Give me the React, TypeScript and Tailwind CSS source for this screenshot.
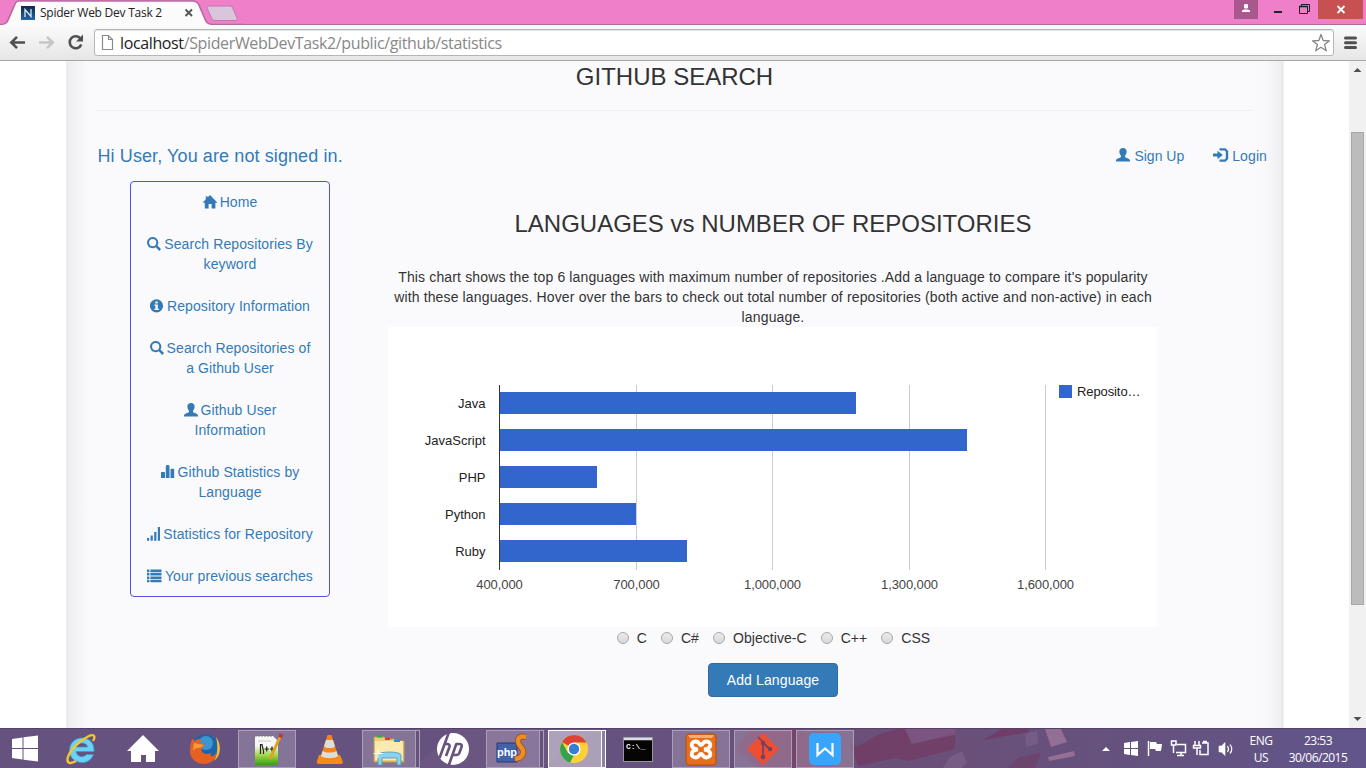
import React from "react";

const G = ({ d, w = 14, className = "" }: { d: string; w?: number; className?: string }) => (
  <svg className={"inline-block shrink-0 fill-current align-[-1.5px] " + className} width={w} height="14" viewBox={`0 0 ${w} 14`}>
    <path fillRule="evenodd" d={d} />
  </svg>
);

const HOME = "M7 0L14 7.300V7.800H12.400V13.500H8.600V9H5.600V13.500H1.800V7.800H0V7.300L2.800 4.300V1.200H4.500V2.500z";
const SEARCH = "M5.7 0a5.6 5.6 0 0 1 4.700 8.600l3.600 3.500-1.700 1.800-3.600-3.600A5.600 5.600 0 1 1 5.700 0zm0 2a3.600 3.600 0 1 0 0 7.200a3.600 3.600 0 1 0 0-7.200z";
const INFO = "M6.500 .2a6.600 6.600 0 1 1 0 13.200a6.600 6.600 0 1 1 0-13.200zM5.300 2.500V4.500H7.700V2.500zM4.400 5.600V6.700H5.400V9.800H4.400V11H8.900V9.800H7.800V5.600z";
const USER = "M7 0C9.300 0 10.600 1.500 10.600 3.400C10.600 5.200 10 6.600 9.100 7.600V9C9.400 10 14 10.400 14 12.400V13.500H0V12.400C0 10.400 4.600 10 4.900 9V7.600C4 6.600 3.400 5.200 3.400 3.400C3.400 1.500 4.700 0 7 0z";
const STATS = "M0 7.600a.6.6 0 0 1 .6-.6H3.400a.6.6 0 0 1 .6.6V13H0zM4.800 1.300L5.500 0H7.700L8.500 1.300V13H4.800zM9.500 4.300a.6.6 0 0 1 .6-.6h2.500a.6.6 0 0 1 .6.6V13H9.500z";
const SIGNAL = "M0 11h2.200v2.800H0zM3.600 8.600h2.200v5.200h-2.200zM7.200 5h2.200v8.800h-2.200zM10.800 0h2.200v13.800h-2.200z";
const LIST = "M0 .6H2.400V3.200H0zM3.400 .6H14.500V3.200H3.400zM0 4H2.400V6.500H0zM3.400 4H14.500V6.500H3.400zM0 7.400H2.400V9.900H0zM3.400 7.400H14.500V9.900H3.400zM0 10.800H2.400V13.300H0zM3.400 10.800H14.500V13.300H3.400z";
const LOGIN = "M4.500 2.800L9.800 7L4.500 11.200V8.600H0V5.400H4.500zM6.500 .3H12.500L15.200 3V11L12.500 13.700H6.500V11.400H11.600L12.800 10.200V3.800L11.600 2.600H6.500z";

const nav: { d: string; w?: number; lines: string[] }[] = [
  { d: HOME, lines: ["Home"] },
  { d: SEARCH, lines: ["Search Repositories By", "keyword"] },
  { d: INFO, lines: ["Repository Information"] },
  { d: SEARCH, lines: ["Search Repositories of", "a Github User"] },
  { d: USER, lines: ["Github User", "Information"] },
  { d: STATS, lines: ["Github Statistics by", "Language"] },
  { d: SIGNAL, w: 13, lines: ["Statistics for Repository"] },
  { d: LIST, w: 15, lines: ["Your previous searches"] },
];

const bars: [string, number][] = [
  ["Java", 357],
  ["JavaScript", 468],
  ["PHP", 98],
  ["Python", 137],
  ["Ruby", 188],
];
const ticks: [string, number][] = [
  ["400,000", 111.5],
  ["700,000", 248.5],
  ["1,000,000", 384.5],
  ["1,300,000", 521.5],
  ["1,600,000", 657.5],
];

function Chart() {
  return (
    <svg width="769" height="300" viewBox="0 0 769 300" className="block bg-white" fontFamily="Liberation Sans, Arial, sans-serif" fontSize="13">
      {ticks.map(([t, x], i) => (
        <g key={t}>
          {i > 0 && <path d={`M${x} 58V243`} stroke="#ccc" />}
          <text x={x} y="262" textAnchor="middle" fill="#444" letterSpacing="-0.1">{t}</text>
        </g>
      ))}
      {bars.map(([t, w], i) => (
        <g key={t}>
          <rect x="111" y={65 + i * 37} width={w} height="22" fill="#3366cc" />
          <text x="97.500" y={81 + i * 37} textAnchor="end" fill="#222">{t}</text>
        </g>
      ))}
      <path d="M111.500 58V243" stroke="#333" />
      <rect x="671" y="58" width="13" height="13" fill="#3366cc" />
      <text x="689" y="69" fill="#222" letterSpacing="-0.1">Reposito…</text>
    </svg>
  );
}

function TabStrip() {
  return (
    <div className="relative flex h-[25px] border-b border-[#b06a9b] bg-[#f07fca]">
      <svg className="absolute left-0 top-0" width="245" height="25" viewBox="0 0 245 25">
        <path d="M0 24.500C5 24.500 6.500 23.500 8 20L14.500 5C15.800 1.800 17 1 20 1H192C196 1 197.500 2 199 5L205.500 20C207 23.500 208.500 24.500 213 24.500H245" fill="none" stroke="#b06a9b" strokeWidth="1.500" />
        <path d="M0 25C6 25 7.500 23.500 9 20L15.500 5C16.500 2.300 17.500 1.800 20 1.800H192C195.500 1.800 196.800 2.600 198 5L204.500 20C206 23.500 208 25 213 25z" fill="#fbfbfb" />
        <path d="M209.500 6H229C231 6 232 6.500 232.700 8L237 18C237.800 19.800 237 20.500 235 20.500H216C213.500 20.500 212.300 20 211.500 18L207.300 8.500C206.700 7 207.500 6 209.500 6z" fill="#d9c5dc" stroke="#c077ad" />
        <defs>
          <linearGradient id="fav" x1="0" y1="0" x2="0" y2="1"><stop stopColor="#10294c" /><stop offset="1" stopColor="#2666a8" /></linearGradient>
        </defs>
        <rect x="21" y="6" width="14" height="14" fill="url(#fav)" />
        <path d="M25 17V9.500L31 16.500V9" fill="none" stroke="#dceaf5" strokeWidth="1.300" />
        <path d="M185.500 9.500L192 16M192 9.500L185.500 16" stroke="#555" strokeWidth="1.900" />
      </svg>
      <span className="relative ml-[40px] mt-[5px] font-['Open_Sans','Noto_Sans',sans-serif] text-[12px] leading-[16px] tracking-[-0.25px] whitespace-nowrap text-[#222]">Spider Web Dev Task 2</span>
      <div className="ml-auto flex h-[19px]">
        <svg width="132" height="19" viewBox="0 0 132 19">
          <rect width="24" height="19" fill="#a9588e" />
          <path d="M10 5L10.700 4H13.300L14 5V7.500L13.300 8.500H10.700L10 7.500zM8 12V10.500L10 9.500H14L16 10.500V12z" fill="#fff" />
          <path d="M40 12H48" stroke="#222" strokeWidth="2" />
          <path d="M65.500 6.500H73.500V13.500H65.500zM67.500 6V4.500H75.500V11.500H74" fill="none" stroke="#222" />
          <path d="M65 6.500H74" stroke="#222" strokeWidth="1.600" />
          <rect x="84" width="45" height="19" fill="#c75050" />
          <path d="M103.500 6L110.500 13M110.500 6L103.500 13" stroke="#fff" strokeWidth="1.800" />
        </svg>
      </div>
    </div>
  );
}

function Toolbar() {
  return (
    <div className="flex h-[36px] items-center border-b border-[#a6a6a6] bg-gradient-to-b from-[#fbfbfb] to-[#e6e6e6]">
      <svg width="94" height="35" viewBox="0 0 94 35" fill="none">
        <path d="M11.500 17.500H25M17 11.800L11.300 17.500L17 23.200" stroke="#505050" strokeWidth="2.600" />
        <path d="M39 17.500H52.500M47 11.800L52.700 17.500L47 23.200" stroke="#c6c6c6" strokeWidth="2.600" />
        <path d="M80.800 14A6 6 0 1 0 81.300 19.500" stroke="#505050" strokeWidth="2.600" />
        <path d="M83 9.500V16.500H76z" fill="#505050" />
      </svg>
      <div className="flex h-[27px] w-[1240px] items-center rounded-[3px] border border-[#b5b5b5] bg-white shadow-[inset_0_1px_0_#e4e4e4]">
        <svg width="25" height="25" viewBox="0 0 25 25" fill="none" stroke="#8a8a8a" strokeWidth="1.200">
          <path d="M7.500 5.500H13.500L17.500 9.500V19.500H7.500zM13.500 5.500V9.500H17.500" />
        </svg>
        <span className="font-['Open_Sans','Noto_Sans',sans-serif] text-[16px] leading-[24px] tracking-[-0.37px] whitespace-nowrap text-[#888]"><span className="text-[#222]">localhost</span>/SpiderWebDevTask2/public/github/statistics</span>
        <svg className="mr-[2px] ml-auto" width="20" height="20" viewBox="0 0 20 20" fill="none" stroke="#868686" strokeWidth="1.300" strokeLinejoin="round">
          <path d="M10 1.500L12.200 7.500L18.500 7.800L13.600 11.600L15.300 17.800L10 14.300L4.700 17.800L6.400 11.600L1.500 7.800L7.800 7.500z" />
        </svg>
      </div>
      <svg width="32" height="35" viewBox="0 0 32 35" stroke="#505050" strokeWidth="3" strokeLinecap="round">
        <path d="M11.500 13H21.500M11.500 17.700H21.500M11.500 22.400H21.500" />
      </svg>
    </div>
  );
}

function Page() {
  return (
    <div className="flex h-[667px] overflow-hidden bg-white pl-[67px] font-['Liberation_Sans',Arial,sans-serif] text-[14px] leading-[20px] text-[#333]">
      <div className="w-[1216px] bg-[linear-gradient(to_right,#dedee2_0,#eeeef1_1px,#f4f4f7_10px,#f9f9fc_20px,#fafafd_28px,#fafafd_1188px,#f9f9fc_1196px,#f4f4f7_1206px,#eeeef1_1215px,#dedee2_1216px)] px-[30px] shadow-[0_0_2px_rgba(0,0,0,0.15)]">
        <h1 className="mr-[1px] ml-[-1px] flex h-[50px] items-start justify-center border-b border-[#eee] pt-[3px] pl-[1px] text-[24px] leading-[26px]">GITHUB SEARCH</h1>
        <div className="flex h-[70px] items-center pt-[19px] text-[#337ab7]">
          <span className="pl-[0.5px] text-[18px] tracking-[0.1px]">Hi User, You are not signed in.</span>
          <span className="ml-auto flex items-center gap-[4px]"><G d={USER} className="mt-[-2px]" />Sign Up</span>
          <span className="mr-[-14px] ml-[29px] flex items-center gap-[3px] tracking-[0.1px]"><G d={LOGIN} w={16} className="mt-[-2px]" />Login</span>
        </div>
        <div className="flex items-start">
          <nav className="ml-[33px] flex w-[200px] flex-col gap-[2px] rounded-[4px] border border-[#5151ee] text-center tracking-[0.1px] text-[#337ab7]">
            {nav.map((n) => (
              <a key={n.lines[0]} className="px-[14px] py-[10px] whitespace-nowrap">
                <G d={n.d} w={n.w} className="mr-[-1px]" /> {n.lines[0]}
                {n.lines[1] && <span className="block">{n.lines[1]}</span>}
              </a>
            ))}
          </nav>
          <main className="ml-[58px] flex w-[769px] flex-col items-center pt-[30px]">
            <h2 className="pl-[1px] text-[24px] leading-[26px]">LANGUAGES vs NUMBER OF REPOSITORIES</h2>
            <p className="mt-[30px] w-[769px] pl-[1px] text-center tracking-[0.14px] whitespace-nowrap">This chart shows the top 6 languages with maximum number of repositories .Add a language to compare it's popularity<br />with these languages. Hover over the bars to check out total number of repositories (both active and non-active) in each<br />language.</p>
            <Chart />
            <div className="mt-[1px] flex h-[20px] items-center gap-[14px] pl-[2px] tracking-[0.05px]">
              {["C", "C#", "Objective-C", "C++", "CSS"].map((l) => (
                <label key={l} className="flex items-center gap-[8px]">
                  <span className="h-[12px] w-[12px] rounded-full border border-[#a8a8a8] bg-gradient-to-b from-[#ececec] to-[#d8d8d8]" />{l}
                </label>
              ))}
            </div>
            <button className="mt-[15px] h-[34px] w-[130px] rounded-[4px] border border-[#2e6da4] bg-[#337ab7] pl-[1px] tracking-[0.12px] text-white">Add Language</button>
          </main>
        </div>
      </div>
      <div className="ml-auto flex w-[17px] flex-col items-center bg-[#f1f1f1]">
        <svg width="17" height="71" viewBox="0 0 17 71"><path d="M4.500 11L8.500 7L12.500 11z" fill="#505050" /></svg>
        <div className="h-[473px] w-[13px] border border-[#a8a8a8] bg-[#bcbcbc]" />
        <svg className="mt-auto" width="17" height="17" viewBox="0 0 17 17"><path d="M4.500 6L8.500 10L12.500 6z" fill="#505050" /></svg>
      </div>
    </div>
  );
}

const Ico = ({ children }: { children: React.ReactNode }) => (
  <svg width="36" height="36" viewBox="0 0 36 36">{children}</svg>
);

const apps: { kind: "plain" | "open" | "stack" | "active"; icon: React.ReactNode }[] = [
  { kind: "plain", icon: <Ico><path fillRule="evenodd" d="M31 20.500H13C13.500 25.500 20 27.500 23.500 23.500H30.500C28 29.500 23.500 32 18.500 31.500C10.500 31 6.500 25.500 6.500 19.500C6.500 12 12 7 19 7C27 7 31.500 12.500 31 20.500zM13 16H24.500C24 11 14.500 10.500 13 16z" fill="#6fd0f6" stroke="#2c9fd8" strokeWidth=".8" /><path d="M30 10C33 5 31 2.500 25 5.500C16 10 7 19 4.800 26.500C3.200 33 8 33 13 30" fill="none" stroke="#f4c52c" strokeWidth="2.400" /></Ico> },
  { kind: "plain", icon: <Ico><path d="M18 4L34 20H30V31H21V24H16V31H6V20H2z" fill="#fff" /></Ico> },
  { kind: "plain", icon: <Ico><circle cx="18" cy="17.500" r="14" fill="#1c65ad" /><circle cx="19" cy="12" r="7" fill="#3d95cf" /><path d="M29 6C35 14 34 25 27 30C31 23 31 14 29 6z" fill="#f8bd36" /><path d="M5 8L8 10C10 8 12 8 14 8L13 12L18 14L15 17C13 21 18 25 24 22C22 27 27 26 30 21C29 29 24 33 17 33C9 33 3 27 3 20C3 15 4 11 5 8z" fill="#e66021" /><path d="M7 12L17 14L13 17C10 16 7 18 6 20z" fill="#f79b38" /></Ico> },
  { kind: "open", icon: <Ico><defs><linearGradient id="npp" x1="0" y1="0" x2="0" y2="1"><stop offset=".35" stopColor="#f7f7f5" /><stop offset=".65" stopColor="#a5d84a" /><stop offset="1" stopColor="#3a9c16" /></linearGradient></defs><path d="M6 5H24L29 10V34H6z" fill="url(#npp)" /><path d="M6 5H24" stroke="#777" strokeDasharray="2 1" /><path d="M9 10H22" stroke="#c8c8c8" /><path d="M11.500 23V13.500H13L14.500 20V23M15.500 18H20M17.700 15.500V20.500M21 18H25M23 15.500V20.500" stroke="#22251d" strokeWidth="1.200" fill="none" /><path d="M31 6L21 28" stroke="#dda123" strokeWidth="3" /><path d="M32.500 3L31 6.500" stroke="#bd3a39" strokeWidth="4" /></Ico> },
  { kind: "plain", icon: <Ico><path d="M8 24H29L32 31C32 33 30 33 28 33H9C6 33 5 32 6 30z" fill="#f68b19" /><path d="M16.500 4H20.500L27.500 26C25 30 12 30 9.500 26z" fill="#f68418" /><path d="M15 9H22L24 15.500C22 17.500 15 17.500 13 15.500zM11.500 20C15 22 22 22 25.500 20L27 25C24 28 13 28 10 25z" fill="#deded8" /></Ico> },
  { kind: "stack", icon: <Ico><path d="M4 6H14L16 8H24L26 10H34V31H4z" fill="#edce76" stroke="#bb9d51" /><path d="M5 10H33V29H5z" fill="#faeab0" /><path d="M7 5.500H12" stroke="#2daf49" strokeWidth="2" /><path d="M15 8H20" stroke="#cf4033" strokeWidth="2" /><path d="M24 10H30" stroke="#328eca" strokeWidth="2" /><path d="M8 34V24C8 20 31 20 31 24V34H27V27H12V34z" fill="#8cd2ef" stroke="#4797bd" strokeWidth=".8" /><path d="M8 18V27M3.500 22.500H12.500" stroke="#fff" /></Ico> },
  { kind: "plain", icon: <Ico><circle cx="18" cy="18" r="16" fill="#fff" /><path d="M14 1L4.500 27M9.500 13H12.500C14.500 13 15 14.500 14.300 16.500L11 25M21.500 12.500L13.500 35M21 13H24.500C27 13 27 14.500 26.400 16.500L24.500 21.500C24 23.300 23 24 21 24H18" fill="none" stroke="#68527e" strokeWidth="2.600" /></Ico> },
  { kind: "stack", icon: <Ico><path d="M3 12H23V31H3z" fill="#4261a9" stroke="#223b73" /><text x="13" y="25" textAnchor="middle" fontFamily="Liberation Sans" fontWeight="bold" fontSize="11" fill="#fff">php</text><path d="M32 6C24 4 21.500 10 27 16C31.500 21 29 27 21 28" fill="none" stroke="#9b4c12" strokeWidth="6" /><path d="M32 6C24 4 21.500 10 27 16C31.500 21 29 27 21 28" fill="none" stroke="#ef8d24" strokeWidth="4.500" /></Ico> },
  { kind: "active", icon: <Ico><circle cx="18" cy="18" r="14" fill="#ffcf37" /><path d="M18 18L6 11A14 14 0 0 1 30.500 11.500H18z" fill="#df4236" /><path d="M6 11L12 22L18 24L14 31.500A14 14 0 0 1 6 11z" fill="#34a350" /><circle cx="18" cy="18" r="6.600" fill="#fff" /><circle cx="18" cy="18" r="5.200" fill="#347fd2" /></Ico> },
  { kind: "plain", icon: <Ico><rect x="2.500" y="6.500" width="29" height="24" fill="#050505" stroke="#979797" /><path d="M3 8H31" stroke="#d7dde5" strokeWidth="2.500" /><text x="5" y="18" fontFamily="Liberation Mono" fontWeight="bold" fontSize="8" fill="#eee">C:\_</text></Ico> },
  { kind: "open", icon: <Ico><rect x="3" y="3" width="30" height="31" rx="3" fill="#e76f1c" stroke="#b54c0c" /><path d="M5 4H31L29 7H7z" fill="#f7ae72" /><path d="M15 18.500C7 18 7 10.500 12.500 10.500C17 10.500 15.500 14 18 14C20.500 14 19 10.500 23.500 10.500C29 10.500 29 18 21 18.500C29 19 29 26.500 23.500 26.500C19 26.500 20.500 23 18 23C15.500 23 17 26.500 12.500 26.500C7 26.500 7 19 15 18.500z" fill="none" stroke="#fff" strokeWidth="3.800" /></Ico> },
  { kind: "open", icon: <Ico><path d="M18 2.500L33.500 18L18 33.500L2.500 18z" fill="#f04e31" stroke="#f04e31" strokeLinejoin="round" /><path d="M13 6L18 11V27M18 12L25 18" stroke="#744260" strokeWidth="1.700" fill="none" /><circle cx="18" cy="12" r="2.300" fill="#744260" /><circle cx="18" cy="26" r="2.300" fill="#744260" /><circle cx="25" cy="18" r="2.300" fill="#744260" /></Ico> },
  { kind: "open", icon: <Ico><rect x="2" y="2" width="32" height="32" rx="5" fill="#38a5fc" /><path d="M10.500 12V24L18 17.500L25.500 24V12" fill="none" stroke="#fff" strokeWidth="2.200" /></Ico> },
];

const cell = {
  plain: "mx-[2px] flex h-[38px] w-[58px] items-center justify-center",
  open: "mx-[2px] flex h-[38px] w-[58px] items-center justify-center border border-[#a99fb9] bg-white/20",
  stack: "mx-[2px] flex h-[38px] w-[58px] items-center justify-center border border-[#a99fb9] bg-white/20 pr-[6px]",
  active: "mx-[2px] flex h-[38px] w-[58px] items-center justify-center border border-white bg-white/45 pr-[6px]",
};

function Taskbar() {
  return (
    <div className="relative flex h-[40px] items-center overflow-hidden border-t border-[#54406b] bg-[linear-gradient(to_right,#66527f_0,#66527f_650px,#6b4f78_800px,#6a5079_960px,#64527e_1130px,#62558b_1366px)]">
      <svg className="absolute left-0 top-0" width="1366" height="40" viewBox="0 0 1366 40">
        <path d="M410 40L460 0H600L540 40z" fill="#81698f" opacity=".2" />
        <path d="M735 20L750 0H800L830 20L810 40H760z" fill="#8c2f55" opacity=".3" />
        <path d="M850 15L858 17L880 5L898 0H905L912 15L955 4V20L908 32L895 29L858 37z" fill="#75305a" opacity=".5" />
        <path d="M905 0H955V6L912 15z" fill="#8a5a85" opacity=".5" />
        <path d="M983 11L1002 0H1030L1028 3z" fill="#75305a" opacity=".6" />
        <path d="M1045 0H1061L1067 13L1051 18zM1048 28L1074 22L1075 27L1049 32z" fill="#a67a9f" opacity=".7" />
        <path d="M1025 5L1037 2L1038 15L1026 18zM950 28L962 22L967 34L960 40H942z" fill="#8c6d95" opacity=".4" />
        <path d="M1005 40L1020 28L1041 24L1035 40z" fill="#75305a" opacity=".35" />
      </svg>
      <svg className="relative" width="50" height="40" viewBox="0 0 50 40" fill="#fff">
        <path d="M12 10L22.500 8.500V19H12zM23.500 8.300L38 6.500V19H23.500zM12 20H22.500V30.500L12 29zM23.500 20H38V32.500L23.500 30.700z" />
      </svg>
      {apps.map((a, i) => (
        <div key={i} className="relative">
          <div className={cell[a.kind]}>{a.icon}</div>
          {(a.kind === "stack" || a.kind === "active") && <div className={a.kind === "active" ? "absolute top-0 right-[2px] h-[38px] w-[5px] border border-white bg-[#8e819f]" : "absolute top-0 right-[2px] h-[38px] w-[5px] border border-[#a99fb9] bg-[#66527f]"} />}
        </div>
      ))}
      <svg className="relative mr-[3px] ml-auto" width="148" height="40" viewBox="0 0 148 40" fill="none" stroke="#fff" strokeWidth="1.500">
        <path d="M6 22L10 18L14 22z" fill="#fff" stroke="none" />
        <path d="M28 14L34 13V19H28zM35 13L42 12V19H35zM28 20H34V26L28 25zM35 20H42V27L35 26z" fill="#fff" stroke="none" />
        <path d="M52.500 12V27" />
        <path d="M54 13H60L61 15H66L65 22H60L59 20H54z" fill="#fff" stroke="none" />
        <path d="M81 15.500H89.500V23.500H80M85 24V26M81 26.500H88M75.500 12H80V16H75.500zM77.500 16V24" />
        <path d="M99 12V16M103 12V16M97.500 16.500H104.500V19H97.500zM101 19V26M106 14H112V25.500H104V21M107 12.500H111" />
        <path d="M123 17H125.500L129 13.500V26.500L125.500 23H123z" fill="#fff" strokeWidth=".6" />
        <path d="M131.500 17Q133.500 20 131.500 23M134 15.500Q137.500 20 134 24.500" strokeWidth="1.200" />
      </svg>
      <div className="relative flex w-[28px] flex-col items-center font-['Open_Sans','Noto_Sans',sans-serif] text-[12px] leading-[17px] tracking-[-0.4px] text-white"><span>ENG</span><span>US</span></div>
      <div className="relative mr-[14px] ml-[9px] flex w-[68px] flex-col items-center font-['Open_Sans','Noto_Sans',sans-serif] text-[12px] leading-[17px] tracking-[-0.5px] whitespace-nowrap text-white"><span>23:53</span><span>30/06/2015</span></div>
    </div>
  );
}

export default function App() {
  return (
    <div className="flex h-[768px] w-[1366px] flex-col overflow-hidden bg-white">
      <TabStrip />
      <Toolbar />
      <Page />
      <Taskbar />
    </div>
  );
}
